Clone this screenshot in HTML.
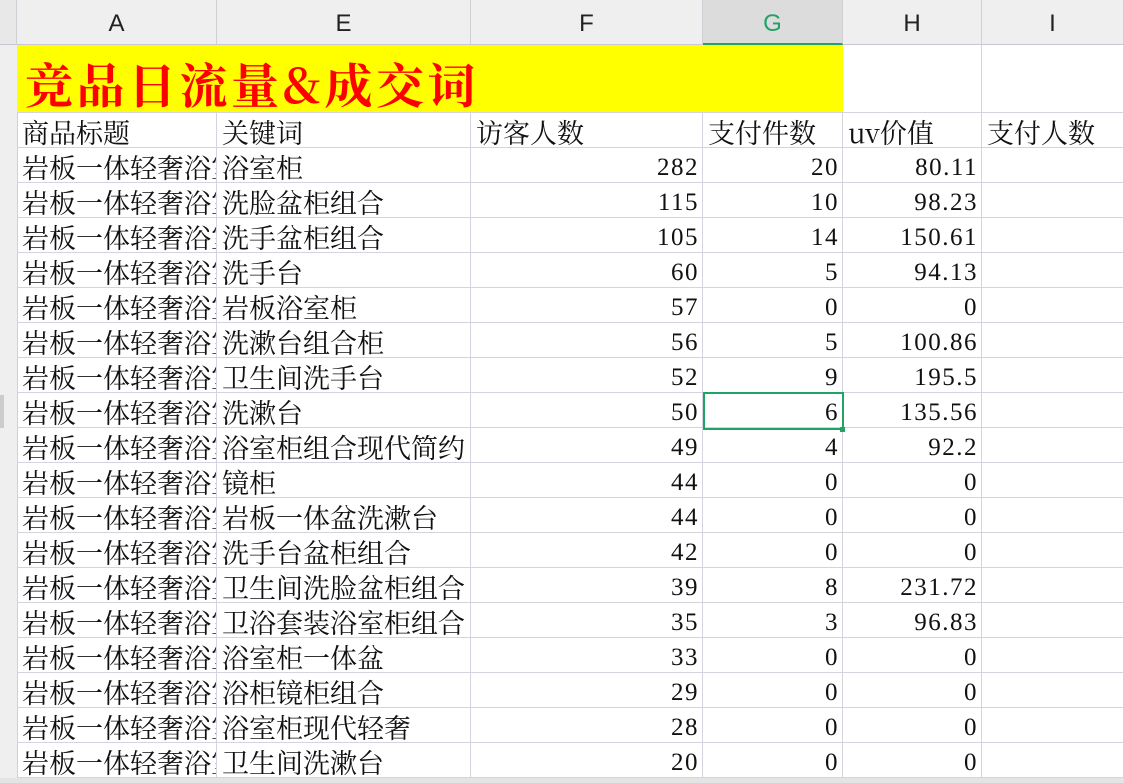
<!DOCTYPE html><html><head><meta charset="utf-8"><style>
body{margin:0;width:1124px;height:783px;overflow:hidden;background:#fff;position:relative;font-family:"Noto Serif CJK SC","Liberation Serif",serif;}
.h{position:absolute;top:0;height:45px;background:#efefef;border-right:1px solid #cfcfd6;border-bottom:1px solid #c8c8d0;box-sizing:border-box;text-align:center;line-height:48px;font-family:"Liberation Sans",sans-serif;font-size:24px;color:#222}
.c{position:absolute;height:35px;box-sizing:border-box;border-right:1px solid #d4d4de;border-bottom:1px solid #d4d4de;font-size:27px;line-height:38px;white-space:nowrap;overflow:hidden;color:#111;padding:0 5px}
.r{text-align:right;font-family:"Liberation Serif",serif;font-size:25px;line-height:40px;letter-spacing:1.5px;padding-right:3px}
</style></head><body>
<div class="h" style="left:0;width:17px;background:#e8e8e8"></div>
<div class="h" style="left:17px;width:200px">A</div>
<div class="h" style="left:217px;width:254px">E</div>
<div class="h" style="left:471px;width:232px">F</div>
<div class="h" style="left:703px;width:140px;background:#dcdcdc;color:#21a366;border-bottom:2px solid #21a366">G</div>
<div class="h" style="left:843px;width:139px">H</div>
<div class="h" style="left:982px;width:142px">I</div>
<div style="position:absolute;left:0;top:45px;width:17px;height:738px;background:#efefef;border-right:1px solid #cfcfd6"></div>
<div style="position:absolute;left:0;top:395px;width:4px;height:33px;background:#ccc"></div>
<div style="position:absolute;left:17px;top:45px;width:826px;height:68px;background:#ffff00;color:#f00;font-weight:bold;font-size:48px;letter-spacing:3.5px;line-height:76px;padding-left:8px;box-sizing:border-box;font-family:'Noto Serif CJK SC',serif;border-bottom:1px solid #d4d4de">竞品日流量&amp;成交词</div>
<div class="c" style="left:843px;top:45px;width:139px;height:68px"></div>
<div class="c" style="left:982px;top:45px;width:142px;height:68px"></div>
<div id="g"></div>
<div style="position:absolute;left:703px;top:392px;width:141px;height:38px;border:2px solid #21a366;box-sizing:border-box"></div>
<div style="position:absolute;left:840px;top:427px;width:5px;height:5px;background:#21a366"></div>
<div style="position:absolute;left:0;top:778px;width:1124px;height:5px;background:#e4e4e4"></div>
<script>
var L=[17,217,471,703,843,982],W=[200,254,232,140,139,142];
var rows=[["商品标题","关键词","访客人数","支付件数","uv价值","支付人数",1],
["浴室柜",282,20,"80.11"],["洗脸盆柜组合",115,10,"98.23"],["洗手盆柜组合",105,14,"150.61"],["洗手台",60,5,"94.13"],["岩板浴室柜",57,0,"0"],["洗漱台组合柜",56,5,"100.86"],["卫生间洗手台",52,9,"195.5"],["洗漱台",50,6,"135.56"],["浴室柜组合现代简约",49,4,"92.2"],["镜柜",44,0,"0"],["岩板一体盆洗漱台",44,0,"0"],["洗手台盆柜组合",42,0,"0"],["卫生间洗脸盆柜组合",39,8,"231.72"],["卫浴套装浴室柜组合",35,3,"96.83"],["浴室柜一体盆",33,0,"0"],["浴柜镜柜组合",29,0,"0"],["浴室柜现代轻奢",28,0,"0"],["卫生间洗漱台",20,0,"0"]];
var h="";
rows.forEach(function(r,i){var t=113+35*i;var v;
if(i==0)v=r.slice(0,6);else v=["岩板一体轻奢浴室柜",r[0],r[1],r[2],r[3],""];
for(var j=0;j<6;j++){var cls="c"+(i>0&&j>=2&&j<=4?" r":"");
h+='<div class="'+cls+'" style="left:'+L[j]+'px;top:'+t+'px;width:'+W[j]+'px;">'+v[j]+'</div>';}});
document.getElementById("g").innerHTML=h;
</script>
</body></html>
